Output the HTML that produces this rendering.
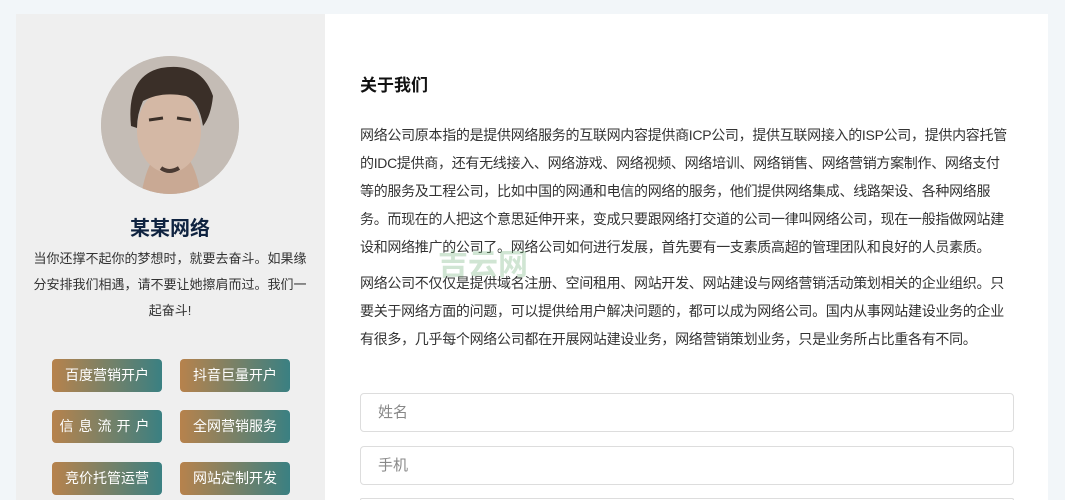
<!DOCTYPE html>
<html><head><meta charset="utf-8"><style>
*{margin:0;padding:0;box-sizing:border-box}
html,body{width:1065px;height:500px;overflow:hidden}
body{background:#f2f6f9;font-family:"Liberation Sans","Noto Sans CJK SC",sans-serif;position:relative}
.left{position:absolute;left:16px;top:14px;width:309px;height:486px;background:#efefef}
.right{position:absolute;left:325px;top:14px;width:723px;height:486px;background:#fff}
.av{position:absolute;left:101px;top:56px;width:138px;height:138px;border-radius:50%;overflow:hidden;background:#c5bdb6}
.name{position:absolute;left:0;width:340px;top:212px;text-align:center;font-size:20px;font-weight:bold;color:#0f2340}
.desc{position:absolute;left:20px;width:300px;top:246px;text-align:center;font-size:13px;line-height:26px;color:#333;white-space:nowrap}
.btn{position:absolute;width:110px;height:33px;border-radius:4px;background:linear-gradient(90deg,#b7824c,#3a8082);color:#fff;font-size:14px;text-align:center;line-height:33px}
h3{position:absolute;left:360px;top:71px;font-size:17px;font-weight:bold;color:#111}
.p{position:absolute;left:360px;font-size:14px;line-height:28px;color:#333;white-space:nowrap;letter-spacing:-0.3px}
.in{position:absolute;left:360px;width:654px;height:39px;border:1px solid #ddd;border-radius:4px;font-size:15px;color:#888;padding-left:17px;line-height:37px;background:#fff}
.wm{position:absolute;left:438px;top:240px;font-size:30px;font-weight:bold;color:rgba(120,180,130,.35)}
</style></head><body>
<div class="left"></div><div class="right"></div>
<div class="av"><svg width="138" height="138" viewBox="0 0 138 138">
<rect width="138" height="138" fill="#c4bcb5"/>
<path d="M40 140 Q45 110 55 100 L85 100 Q95 110 100 140Z" fill="#c9a994"/>
<ellipse cx="68" cy="75" rx="32" ry="42" fill="#d4b8a5"/>
<path d="M30 70 Q25 20 60 12 Q100 5 112 40 Q110 60 102 70 Q98 45 85 40 Q60 35 42 45 Q36 58 36 72Z" fill="#3a2f28"/>
<path d="M48 64 L62 62 M76 62 L90 64" stroke="#3a2f28" stroke-width="3"/>
<path d="M60 112 Q68 118 78 112" stroke="#4a3a32" stroke-width="4" fill="none"/>
</svg></div>
<div class="name">某某网络</div>
<div class="desc">当你还撑不起你的梦想时，就要去奋斗。如果缘<br>分安排我们相遇，请不要让她擦肩而过。我们一<br>起奋斗!</div>
<div class="btn" style="left:52px;top:359px">百度营销开户</div>
<div class="btn" style="left:180px;top:359px">抖音巨量开户</div>
<div class="btn" style="left:52px;top:410px;letter-spacing:5px">信息流开户</div>
<div class="btn" style="left:180px;top:410px">全网营销服务</div>
<div class="btn" style="left:52px;top:462px;height:33px">竞价托管运营</div>
<div class="btn" style="left:180px;top:462px;height:33px">网站定制开发</div>
<h3>关于我们</h3>
<div class="p" style="top:121px">网络公司原本指的是提供网络服务的互联网内容提供商ICP公司，提供互联网接入的ISP公司，提供内容托管<br>的IDC提供商，还有无线接入、网络游戏、网络视频、网络培训、网络销售、网络营销方案制作、网络支付<br>等的服务及工程公司，比如中国的网通和电信的网络的服务，他们提供网络集成、线路架设、各种网络服<br>务。而现在的人把这个意思延伸开来，变成只要跟网络打交道的公司一律叫网络公司，现在一般指做网站建<br>设和网络推广的公司了。网络公司如何进行发展，首先要有一支素质高超的管理团队和良好的人员素质。</div>
<div class="wm">吉云网</div>
<div class="p" style="top:269px">网络公司不仅仅是提供域名注册、空间租用、网站开发、网站建设与网络营销活动策划相关的企业组织。只<br>要关于网络方面的问题，可以提供给用户解决问题的，都可以成为网络公司。国内从事网站建设业务的企业<br>有很多，几乎每个网络公司都在开展网站建设业务，网络营销策划业务，只是业务所占比重各有不同。</div>
<div class="in" style="top:393px">姓名</div>
<div class="in" style="top:446px">手机</div>
<div class="in" style="top:498px;height:2px;border-bottom:none;border-radius:4px 4px 0 0"></div>
</body></html>
